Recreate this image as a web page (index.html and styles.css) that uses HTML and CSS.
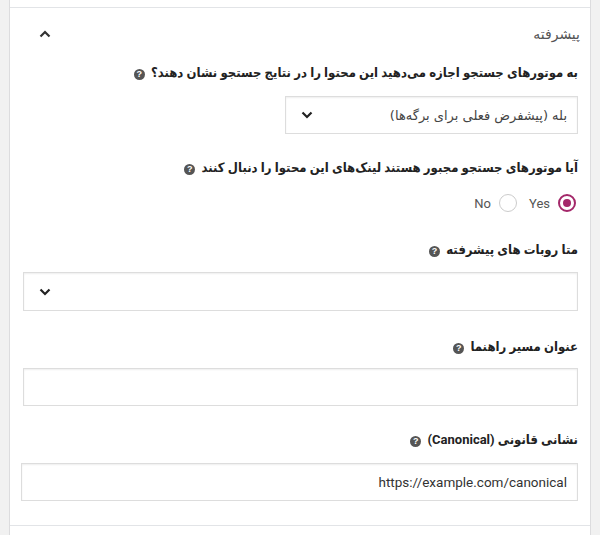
FILE: index.html
```html
<!DOCTYPE html>
<html lang="fa" dir="rtl">
<head>
  <meta charset="UTF-8">
  <meta name="viewport" content="width=device-width, initial-scale=1.0">
  <title>پیشرفته</title>
  <link rel="stylesheet" href="styles.css">
</head>
<body>
  <div class="panel">
    <div class="section-prev"></div>

    <div class="section">
      <div class="section-head">
        <span class="section-title">پیشرفته</span>
        <svg class="chev" width="12" height="8" viewBox="0 0 12 8"><path d="M1.5 6.5 L6 2 L10.5 6.5" fill="none" stroke="#333" stroke-width="2.2"/></svg>
      </div>

      <div class="field f1">
        <div class="label">به موتورهای جستجو اجازه می‌دهید این محتوا را در نتایج جستجو نشان دهند؟ <span class="help">?</span></div>
        <div class="select short">
          <span>بله (پیشفرض فعلی برای برگه‌ها)</span>
          <svg width="12" height="8" viewBox="0 0 12 8"><path d="M1.5 1.5 L6 6 L10.5 1.5" fill="none" stroke="#222" stroke-width="2.2"/></svg>
        </div>
      </div>

      <div class="field f2">
        <div class="label">آیا موتورهای جستجو مجبور هستند لینک‌های این محتوا را دنبال کنند <span class="help">?</span></div>
        <div class="radios">
          <span class="radio checked"></span><span class="radio-text">Yes</span>
          <span class="radio"></span><span class="radio-text">No</span>
        </div>
      </div>

      <div class="field f3">
        <div class="label">متا روبات های پیشرفته <span class="help">?</span></div>
        <div class="select">
          <span></span>
          <svg width="12" height="8" viewBox="0 0 12 8"><path d="M1.5 1.5 L6 6 L10.5 1.5" fill="none" stroke="#222" stroke-width="2.2"/></svg>
        </div>
      </div>

      <div class="field f4">
        <div class="label">عنوان مسیر راهنما <span class="help">?</span></div>
        <div class="input"></div>
      </div>

      <div class="field f5">
        <div class="label">نشانی قانونی (Canonical) <span class="help">?</span></div>
        <div class="input wide"><span class="latin">https://example.com/canonical</span></div>
      </div>
    </div>

    <div class="section-next"></div>
  </div>
</body>
</html>
```
FILE: styles.css
```css
body { margin: 0; background: #f1f1f1; font-family: "DejaVu Sans", "Noto Sans", sans-serif; color: #333; }
.panel { margin: 0 9px 0 9px; background: #fff; border-left: 1px solid #dcdcde; border-right: 1px solid #dcdcde; height: 535px; }
.section-prev { height: 7px; border-bottom: 1px solid #e2e4e7; }
.section { padding: 0 12px 24px 13px; border-bottom: 1px solid #e2e4e7; }
.section-next { height: 9px; }

.section-head { height: 52px; display: flex; align-items: center; justify-content: space-between; padding: 0 0 0 16px; }
.section-title { font-size: 14px; color: #555; margin-right: -2px; }

.field .label { font-family: "Roboto", "DejaVu Sans Condensed", sans-serif; font-size: 13px; font-weight: bold; line-height: 20px; color: #222; }
.f1 { margin-top: 3px; }
.f2 { margin-top: 24px; }
.f3 { margin-top: 27px; }
.f4 { margin-top: 26px; }
.f5 { margin-top: 24px; }

.help { display: inline-block; width: 11px; height: 11px; border-radius: 50%; background: #555; color: #fff; font-size: 9px; line-height: 11px; text-align: center; font-weight: bold; font-family: "Liberation Sans", sans-serif; vertical-align: 0; margin-right: 3px; }

.select, .input { box-sizing: border-box; height: 38px; border: 1px solid #ddd; box-shadow: inset 0 1px 2px rgba(0,0,0,.07); display: flex; align-items: center; justify-content: space-between; padding: 0 10px 0 15px; margin-top: 13px; font-size: 13px; color: #444; }
.select.short { width: 293px; }
.f3 .select { height: 39px; margin-top: 12px; }
.f4 .input { margin-top: 11px; }
.input.wide { margin-left: -2px; }
.latin { font-family: "Roboto", "Liberation Sans", sans-serif; font-size: 13.5px; color: #333; }

.radios { display: flex; align-items: center; height: 20px; margin-top: 15px; padding-right: 2px; font-family: "Roboto", "Liberation Sans", sans-serif; font-size: 13px; color: #555; }
.radio { box-sizing: border-box; width: 18px; height: 18px; border-radius: 50%; border: 1px solid #ccc; background: #fff; }
.radio.checked { border: 2px solid #a4286a; position: relative; }
.radio.checked::after { content: ""; position: absolute; left: 3px; top: 3px; width: 8px; height: 8px; border-radius: 50%; background: #a4286a; }
.radio-text { margin: 0 8px 0 12px; }
```
